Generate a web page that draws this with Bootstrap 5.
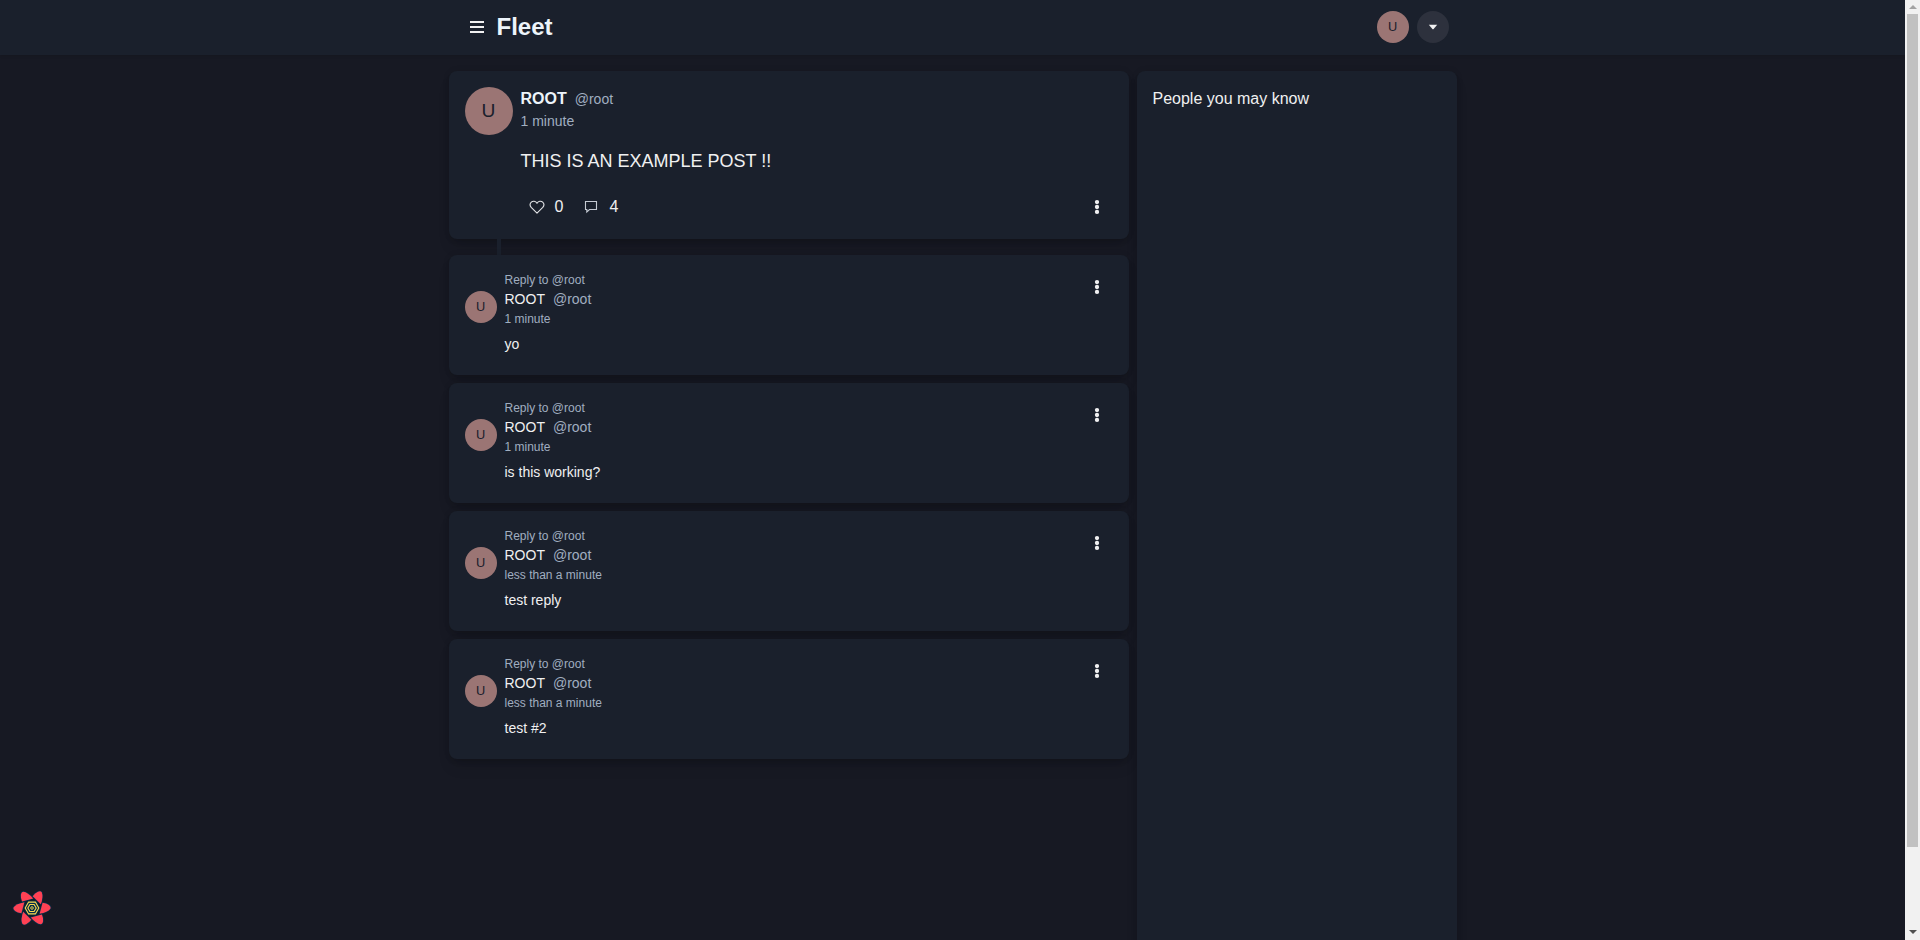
<!DOCTYPE html>
<html lang="en">
<head>
<meta charset="utf-8">
<title>Fleet</title>
<link rel="stylesheet" href="https://cdn.jsdelivr.net/npm/bootstrap@5.3.0/dist/css/bootstrap.min.css">
<style>
html, body { height: 940px; overflow: hidden; }
body { background: #171923; color: #f0f0f1; font-family: "Liberation Sans", Arial, sans-serif; }
svg { display: block; flex: none; }
.panel { background: #1a202c; border-radius: 8px; box-shadow: 0 10px 15px -3px rgba(0,0,0,.1), 0 4px 6px -2px rgba(0,0,0,.12), 0 0 6px rgba(0,0,0,.1); }
.topbar { background: #1a202c; height: 55px; box-shadow: 0 1px 3px rgba(0,0,0,.1); }
.wrap { width: 1008px; }
.topbar .wrap { padding: 0 8px 1px 21px; }
.brand { font-size: 24px; line-height: 32px; margin-left: 13px; }
.bright { color: #edf4fa; }
.soft { color: #a0aec0; }
.avatar { width: 32px; height: 32px; background: #9b7574; color: #1a202c; font-size: 12.8px; line-height: 1; flex: none; }
.avatar-lg { width: 48px; height: 48px; font-size: 19.2px; }
.round { width: 32px; height: 32px; background: #2d313d; }
.feed { width: 680px; }
.main-post { height: 168px; }
.reply { height: 120px; }
.link-line { width: 4px; height: 16px; margin-left: 48px; background: #1a202c; }
.t12 { font-size: 12px; line-height: 18px; }
.t14 { font-size: 14px; line-height: 21px; }
.t16 { font-size: 16px; line-height: 24px; }
.t18 { font-size: 18px; line-height: 27px; margin-top: 16px; }
.actions { height: 32px; margin-top: 16px; padding-left: 8px; }
.more { width: 32px; height: 32px; flex: none; }
.reply .avatar { margin-top: 20px; }
.reply-text { margin-top: 6px; }
.side { width: 320px; height: 900px; }
.scroll { width: 15px; height: 940px; background: #f1f1f1; padding: 5px 2px; }
.thumb { height: 833px; background: #c1c1c1; margin-top: 4px; }
.devtools { left: 12px; top: 888px; }
</style>
</head>
<body>
<svg class="d-none">
  <symbol id="dots" viewBox="0 0 6 16"><circle cx="3" cy="3.1" r="2.15"/><circle cx="3" cy="8" r="2.15"/><circle cx="3" cy="12.9" r="2.15"/></symbol>
</svg>
<div class="d-flex h-100">
  <div class="flex-grow-1 overflow-hidden">
    <header class="topbar d-flex justify-content-center">
      <div class="wrap d-flex align-items-center">
        <svg width="14" height="14" viewBox="0 0 14 14" fill="#f0f0f1"><path d="M0 1h14v2H0zM0 6h14v2H0zM0 11h14v2H0z"/></svg>
        <div class="brand bright fw-bold">Fleet</div>
        <div class="avatar rounded-circle d-flex align-items-center justify-content-center ms-auto me-2">U</div>
        <div class="round rounded-circle d-flex align-items-center justify-content-center"><svg width="10" height="6" viewBox="0 0 10 6"><path d="M.8.8h8.400L5.400 5.200h-.8z" fill="#f0f0f1"/></svg></div>
      </div>
    </header>
    <main class="wrap mx-auto d-flex gap-2 pt-3">
      <section class="feed">
        <article class="panel main-post p-3 d-flex gap-2">
          <div class="avatar avatar-lg rounded-circle d-flex align-items-center justify-content-center">U</div>
          <div class="flex-grow-1">
            <div class="d-flex gap-2 t16"><span class="bright fw-bold">ROOT</span><span class="soft" style="font-size:14px">@root</span></div>
            <div class="t14 soft">1 minute</div>
            <div class="t18">THIS IS AN EXAMPLE POST !!</div>
            <div class="actions d-flex align-items-center t16">
              <svg width="16" height="16" viewBox="0 0 16 16" fill="none" stroke="#e2e3e6" stroke-width="1.1" stroke-linejoin="round"><path d="M8 14.200 2.200 8.400C.8 6.800 1 4.500 2.300 3.200 4 1.600 6.600 2 8 4.300c1.400-2.300 4-2.700 5.700-1.100 1.300 1.300 1.500 3.600.1 5.200z"/></svg>
              <span style="margin-left:10px">0</span>
              <svg style="margin-left:20px" width="16" height="16" viewBox="0 0 16 16" fill="none" stroke="#c5cad3" stroke-width="1.1"><path d="M2.500 2.500h11v8H6.500L3.800 13v-2.500H2.500z"/></svg>
              <span style="margin-left:10px">4</span>
              <span class="more d-flex align-items-center justify-content-center ms-auto"><svg width="6" height="16" fill="#f0f0f1"><use href="#dots"/></svg></span>
            </div>
          </div>
        </article>
        <div class="link-line"></div>
        <div class="d-flex flex-column gap-2">
          <article class="panel reply p-3 d-flex gap-2">
            <div class="avatar rounded-circle d-flex align-items-center justify-content-center">U</div>
            <div class="flex-grow-1"><div class="t12 soft">Reply to @root</div><div class="t14 d-flex gap-2"><span>ROOT</span><span class="soft">@root</span></div><div class="t12 soft">1 minute</div><div class="t14 reply-text">yo</div></div>
            <span class="more d-flex align-items-center justify-content-center"><svg width="6" height="16" fill="#f0f0f1"><use href="#dots"/></svg></span>
          </article>
          <article class="panel reply p-3 d-flex gap-2">
            <div class="avatar rounded-circle d-flex align-items-center justify-content-center">U</div>
            <div class="flex-grow-1"><div class="t12 soft">Reply to @root</div><div class="t14 d-flex gap-2"><span>ROOT</span><span class="soft">@root</span></div><div class="t12 soft">1 minute</div><div class="t14 reply-text">is this working?</div></div>
            <span class="more d-flex align-items-center justify-content-center"><svg width="6" height="16" fill="#f0f0f1"><use href="#dots"/></svg></span>
          </article>
          <article class="panel reply p-3 d-flex gap-2">
            <div class="avatar rounded-circle d-flex align-items-center justify-content-center">U</div>
            <div class="flex-grow-1"><div class="t12 soft">Reply to @root</div><div class="t14 d-flex gap-2"><span>ROOT</span><span class="soft">@root</span></div><div class="t12 soft">less than a minute</div><div class="t14 reply-text">test reply</div></div>
            <span class="more d-flex align-items-center justify-content-center"><svg width="6" height="16" fill="#f0f0f1"><use href="#dots"/></svg></span>
          </article>
          <article class="panel reply p-3 d-flex gap-2">
            <div class="avatar rounded-circle d-flex align-items-center justify-content-center">U</div>
            <div class="flex-grow-1"><div class="t12 soft">Reply to @root</div><div class="t14 d-flex gap-2"><span>ROOT</span><span class="soft">@root</span></div><div class="t12 soft">less than a minute</div><div class="t14 reply-text">test #2</div></div>
            <span class="more d-flex align-items-center justify-content-center"><svg width="6" height="16" fill="#f0f0f1"><use href="#dots"/></svg></span>
          </article>
        </div>
      </section>
      <aside class="panel side p-3 t16">People you may know</aside>
    </main>
  </div>
  <div class="scroll flex-shrink-0 d-flex flex-column">
    <svg class="mx-auto" width="8" height="5"><path d="M4 0 8 4H0z" fill="#a3a3a3"/></svg>
    <div class="thumb"></div>
    <svg class="mx-auto mt-auto" width="8" height="5"><path d="M0 0h8L4 4z" fill="#505050"/></svg>
  </div>
</div>
<svg class="devtools position-absolute" width="40" height="40" viewBox="-20 -20 40 40">
  <defs><path id="petal" d="M10.600-5.300Q14.500-4.900 17-3 19.400-1 18.400.7 15.800 4.200 7.600 5.800z"/></defs>
  <g fill="#ff4154" stroke="#00314b" stroke-width="1.400" stroke-linejoin="round" paint-order="stroke">
    <use href="#petal"/><use href="#petal" transform="rotate(60)"/><use href="#petal" transform="rotate(120)"/><use href="#petal" transform="rotate(180)"/><use href="#petal" transform="rotate(240)"/><use href="#petal" transform="rotate(300)"/>
  </g>
  <path d="M-8.400 0-4.200-7.200H4.200L8.400 0 4.200 7.200H-4.200z" fill="#002c4b"/>
  <g fill="none" stroke="#ffd94c" stroke-width="1.100"><path d="M-6.800 0-3.400-5.900H3.400L6.800 0 3.400 5.900H-3.400z"/><path d="M-4.200 0-2.100-3.500H2.100L4.200 0 2.100 3.500H-2.100z"/><circle r="1.300" stroke-width=".9"/></g>
</svg>
<script src="https://cdn.jsdelivr.net/npm/bootstrap@5.3.0/dist/js/bootstrap.bundle.min.js"></script>
</body>
</html>
